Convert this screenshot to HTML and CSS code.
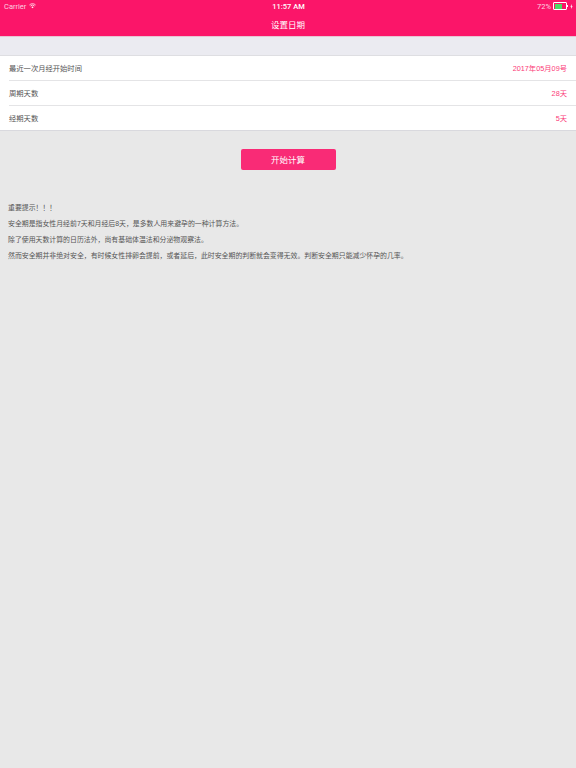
FILE: index.html
```html
<!DOCTYPE html>
<html lang="zh-CN">

<head>
    <meta charset="UTF-8">
    <title>设置日期</title>
    <link rel="stylesheet" href="styles.css">
</head>

<body>
    <!-- Status bar and title -->
    <header class="header">
        <div class="status">
            <div class="status__left">
                <span>Carrier</span>
                <svg class="wifi" viewBox="0 0 12 9" width="7" height="5.5">
                    <path d="M0.7 3.2 A7.5 7.5 0 0 1 11.3 3.2 M2.5 5 A5 5 0 0 1 9.5 5" fill="none" stroke="#fff" stroke-width="1.3" />
                    <path d="M4 6.6 A2.8 2.8 0 0 1 8 6.6 L6 8.8 Z" fill="#fff" />
                </svg>
            </div>
            <div class="status__time">11:57 AM</div>
            <div class="status__right">
                <span>72%</span>
                <div class="battery"><div class="battery__level"></div></div>
                <div class="battery__cap"></div>
                <svg class="bolt" viewBox="0 0 4 7" width="3" height="5">
                    <path d="M2.4 0 L0.4 4 H1.7 L1.4 7 L3.6 3 H2.2 Z" fill="#fff" />
                </svg>
            </div>
        </div>
        <h1 class="title">设置日期</h1>
    </header>

    <div class="band"></div>

    <!-- Settings rows -->
    <section class="list">
        <div class="row">
            <span class="row__label">最近一次月经开始时间</span>
            <span class="row__value">2017年05月09号</span>
        </div>
        <div class="row">
            <span class="row__label">周期天数</span>
            <span class="row__value">28天</span>
        </div>
        <div class="row">
            <span class="row__label">经期天数</span>
            <span class="row__value">5天</span>
        </div>
    </section>

    <div class="action">
        <button class="start">开始计算</button>
    </div>

    <!-- Notes -->
    <section class="notes">
        <p>重要提示！！！</p>
        <p>安全期是指女性月经前7天和月经后8天，是多数人用来避孕的一种计算方法。</p>
        <p>除了使用天数计算的日历法外，尚有基础体温法和分泌物观察法。</p>
        <p>然而安全期并非绝对安全，有时候女性排卵会提前，或者延后，此时安全期的判断就会变得无效。判断安全期只能减少怀孕的几率。</p>
    </section>
</body>

</html>
```

FILE: styles.css
```css
html, body {
    height: 100%;
}

body {
    background-color: #e8e8e8;
    font-family: "Liberation Sans", "Noto Sans CJK SC", sans-serif;
    margin: 0;
    padding: 0;
    color: #555;
}

.header {
    background-color: #fb1569;
    color: white;
    height: 36px;
    border-bottom: 1px solid #e8c4d2;
}

.status {
    display: grid;
    grid-template-columns: 1fr auto 1fr;
    align-items: center;
    height: 12px;
    padding: 0 3px 0 4px;
    font-family: Roboto, sans-serif;
    font-size: 7.5px;
    color: #fdd0e0;
}

.status__left {
    display: flex;
    align-items: center;
    gap: 3px;
}

.status__time {
    color: white;
    font-weight: 500;
}

.status__right {
    display: flex;
    align-items: center;
    justify-content: flex-end;
}

.status__right span {
    margin-right: 2px;
}

.battery {
    width: 11px;
    height: 5px;
    border: 0.5px solid #fff;
    border-radius: 1px;
    padding: 0.5px;
}

.battery__level {
    width: 72%;
    height: 100%;
    background-color: #4cd964;
}

.battery__cap {
    width: 1px;
    height: 2px;
    background-color: #fff;
    margin-right: 2px;
}

.title {
    margin: 0;
    font-size: 8.5px;
    font-weight: normal;
    line-height: 26px;
    text-align: center;
}

.band {
    height: 18px;
    background-color: #ebebf1;
    border-bottom: 1px solid #dedee2;
}

.list {
    background-color: white;
    border-bottom: 1px solid #d9d9de;
    padding-left: 9px;
}

.row {
    display: flex;
    justify-content: space-between;
    align-items: center;
    height: 24px;
    padding-right: 9px;
    border-bottom: 1px solid #e4e4e6;
    font-size: 7.3px;
}

.row:last-child {
    border-bottom: none;
}

.row__label {
    color: #555;
}

.row__value {
    color: #fb3a78;
}

.action {
    display: flex;
    justify-content: center;
    padding-top: 18px;
}

.start {
    width: 95px;
    height: 21px;
    padding: 0 0 1px;
    border: none;
    border-radius: 2px;
    background-color: #f92b76;
    color: white;
    font-family: inherit;
    font-size: 8.5px;
}

.notes {
    padding: 34px 8px 0;
    font-size: 6.9px;
    color: #555;
}

.notes p {
    margin: 0 0 8px;
    line-height: 8px;
}
```
